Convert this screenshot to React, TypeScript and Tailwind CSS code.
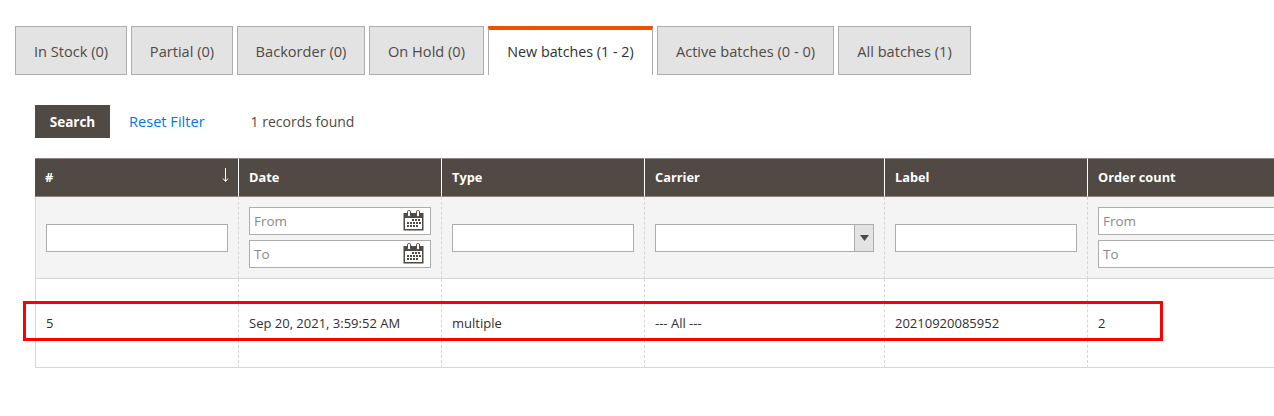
import React from "react";

const tabs = [
  { label: "In Stock (0)", w: "w-[112px]" },
  { label: "Partial (0)", w: "w-[102px]" },
  { label: "Backorder (0)", w: "w-[128px]" },
  { label: "On Hold (0)", w: "w-[115px]" },
  { label: "New batches (1 - 2)", w: "w-[165px]", active: true },
  { label: "Active batches (0 - 0)", w: "w-[177px]" },
  { label: "All batches (1)", w: "w-[133px]" },
];

function Calendar() {
  return (
    <svg width="21" height="21" viewBox="0 0 21 21" className="absolute right-[7px] top-[3px]" aria-hidden="true">
      <rect x="0.5" y="3" width="20" height="17.5" fill="#514943" />
      <rect x="2" y="8" width="17" height="11" fill="#ffffff" />
      <rect x="4.5" y="0.5" width="3" height="6" rx="1.2" fill="#ffffff" stroke="#514943" />
      <rect x="13.5" y="0.5" width="3" height="6" rx="1.2" fill="#ffffff" stroke="#514943" />
      <g fill="#514943">
        <rect x="9" y="9" width="2" height="2" /><rect x="12" y="9" width="2" height="2" /><rect x="15" y="9" width="2" height="2" />
        <rect x="4" y="12" width="2" height="2" /><rect x="7" y="12" width="2" height="2" /><rect x="10" y="12" width="2" height="2" /><rect x="13" y="12" width="2" height="2" /><rect x="16" y="12" width="2" height="2" />
        <rect x="4" y="15" width="2" height="2" /><rect x="7" y="15" width="2" height="2" /><rect x="10" y="15" width="2" height="2" /><rect x="13" y="15" width="2" height="2" />
      </g>
    </svg>
  );
}

const inputCls =
  "block w-full h-[28px] border border-[#adadad] bg-white px-1 text-[13.5px] text-[#303030] placeholder:text-[#8a8a8a] outline-none";

function DateInput({ placeholder }: { placeholder: string }) {
  return (
    <div className="relative w-[182px]">
      <input className={inputCls} placeholder={placeholder} />
      <Calendar />
    </div>
  );
}

const thCls =
  "h-[39px] border-t border-t-[#8a837f] border-b border-b-[#8a837f] border-r border-r-white bg-[#514943] pl-[10px] text-left align-middle text-[12.8px] font-bold text-white";
const fCls =
  "h-[82px] border-r border-b border-r-[#d6d6d6] border-b-[#d6d6d6] [border-right-style:dashed] [border-bottom-style:solid] bg-[#f4f4f4] pl-[10px] align-middle";
const dCls =
  "h-[89px] border-r border-b border-r-[#d6d6d6] border-b-[#d6d6d6] [border-right-style:dashed] [border-bottom-style:solid] pl-[10px] pt-[2px] align-middle text-[13px] text-[#303030]";

export default function App() {
  return (
    <div className="relative h-[416px] w-[1274px] overflow-hidden bg-white font-['Open_Sans',sans-serif]">
      <div className="flex gap-1 pl-[15px] pt-[26px]">
        {tabs.map((t) => (
          <div
            key={t.label}
            className={
              t.active
                ? `${t.w} flex h-[49px] items-center justify-center border-x border-x-[#adadad] border-t-[4px] border-t-[#eb5202] bg-white pb-[2px] text-[14.3px] text-[#303030]`
                : `${t.w} flex h-[49px] items-center justify-center border border-[#adadad] bg-[#e3e3e3] pt-[3px] text-[14.6px] text-[#514943]`
            }
          >
            {t.label}
          </div>
        ))}
      </div>

      <div className="flex items-center pl-[35px] pt-[30px]">
        <button className="h-[33px] w-[75px] bg-[#514943] pt-[1px] text-[13.5px] font-bold text-white">Search</button>
        <a className="ml-[19px] text-[14.6px] text-[#007bdb]">Reset Filter</a>
        <span className="ml-[46px] text-[14px] text-[#514943]">1 records found</span>
      </div>

      <div className="pl-[35px] pt-[20px]">
        <table className="w-[1300px] table-fixed border-separate border-spacing-0">
          <colgroup>
            <col className="w-[204px]" />
            <col className="w-[203px]" />
            <col className="w-[203px]" />
            <col className="w-[240px]" />
            <col className="w-[203px]" />
            <col className="w-[247px]" />
          </colgroup>
          <thead>
            <tr>
              <th className={`${thCls} relative`}>
                #
                <svg width="7" height="14" viewBox="0 0 7 14" className="absolute right-[9px] top-[9px]" aria-hidden="true">
                  <path d="M3.5 0V13" stroke="#ffffff" strokeWidth="1" fill="none" />
                  <path d="M1 10.5L3.5 13.5L6 10.5" stroke="#ffffff" strokeWidth="1" fill="none" />
                </svg>
              </th>
              <th className={thCls}>Date</th>
              <th className={thCls}>Type</th>
              <th className={thCls}>Carrier</th>
              <th className={thCls}>Label</th>
              <th className={thCls}>Order count</th>
            </tr>
            <tr>
              <td className={`${fCls} border-l border-l-[#d6d6d6] [border-left-style:solid]`}>
                <input className={`${inputCls} !w-[182px]`} />
              </td>
              <td className={fCls}>
                <div className="flex flex-col gap-[5px]">
                  <DateInput placeholder="From" />
                  <DateInput placeholder="To" />
                </div>
              </td>
              <td className={fCls}>
                <input className={`${inputCls} !w-[182px]`} />
              </td>
              <td className={fCls}>
                <div className="flex h-[28px] w-[219px] border border-[#adadad] bg-white">
                  <div className="flex-1" />
                  <div className="flex w-[19px] items-center justify-center border-l border-l-[#adadad] bg-[#e3e3e3]">
                    <svg width="9" height="6" viewBox="0 0 9 6" aria-hidden="true">
                      <path d="M0 0H9L4.5 6Z" fill="#514943" />
                    </svg>
                  </div>
                </div>
              </td>
              <td className={fCls}>
                <input className={`${inputCls} !w-[182px]`} />
              </td>
              <td className={fCls}>
                <div className="flex w-[220px] flex-col gap-[5px]">
                  <input className={inputCls} placeholder="From" />
                  <input className={inputCls} placeholder="To" />
                </div>
              </td>
            </tr>
          </thead>
          <tbody>
            <tr>
              <td className={`${dCls} border-l border-l-[#d6d6d6] [border-left-style:solid]`}>5</td>
              <td className={dCls}>Sep 20, 2021, 3:59:52 AM</td>
              <td className={dCls}>multiple</td>
              <td className={dCls}>--- All ---</td>
              <td className={dCls}>20210920085952</td>
              <td className={dCls}>2</td>
            </tr>
          </tbody>
        </table>
      </div>

      <div className="pointer-events-none absolute left-[23px] top-[301px] h-[40px] w-[1140px] border-[3px] border-[#ff0000]" />
    </div>
  );
}
